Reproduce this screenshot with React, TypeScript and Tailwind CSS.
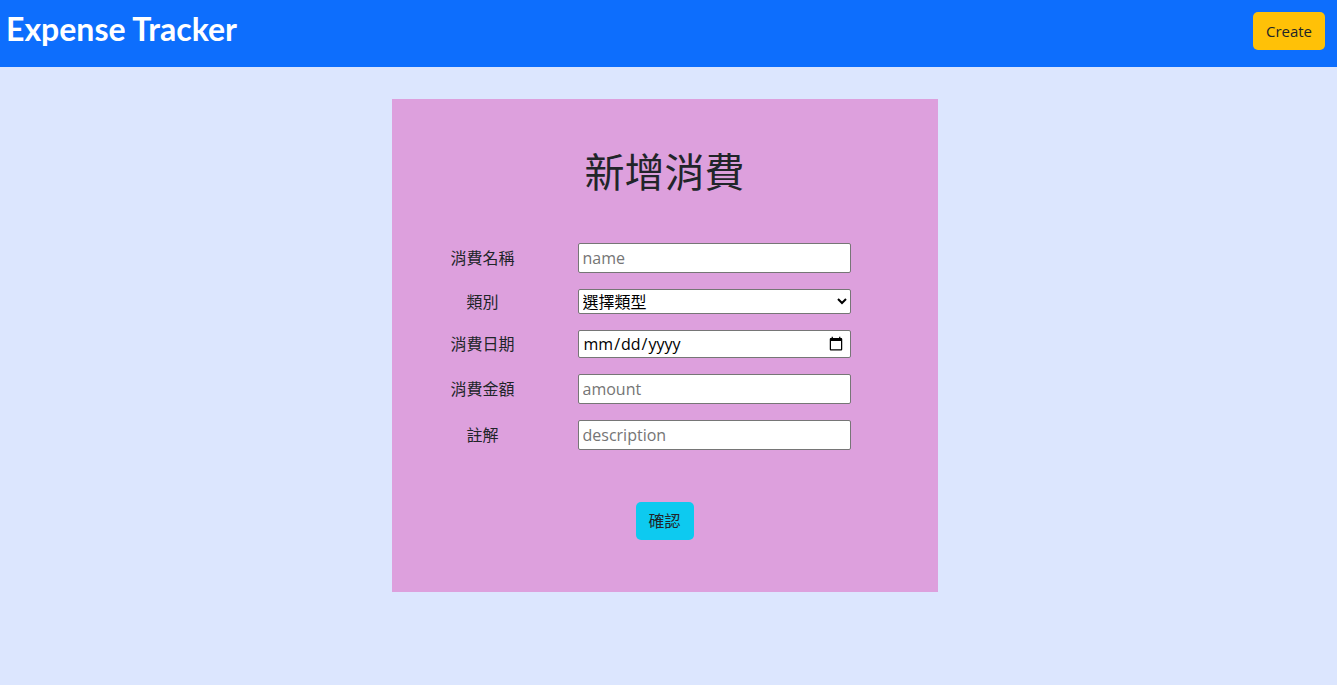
import React from 'react';

const font = { fontFamily: '"Open Sans", "Noto Sans CJK TC", sans-serif' };

// one label + field line of the form
const Row: React.FC<{ label: string; children: React.ReactNode }> = ({ label, children }) => (
  <div className="flex items-center">
    <div className="w-[100px] text-center text-[16px] text-[#212529]">{label}</div>
    <div className="ml-[45px]">{children}</div>
  </div>
);

const inputCls =
  'w-[273px] h-[30px] bg-white border border-[#767676] rounded-[2px] px-[4px] text-[16px] text-black placeholder:text-[#757575] outline-none';

export default function App() {
  return (
    <div className="min-h-[685px] bg-[#dce6fe]" style={font}>
      {/* Navbar */}
      <header className="h-[67px] bg-[#0d6efd] flex items-start justify-between">
        <h1 className="pl-[6px] pt-[8px] text-[32px] leading-[42px] font-bold text-white font-['Lato',sans-serif]">
          Expense Tracker
        </h1>
        <button className="mt-[12px] mr-[12px] h-[38px] w-[72px] rounded-[5px] bg-[#ffc107] text-[15px] text-[#212529]">
          Create
        </button>
      </header>

      {/* Card */}
      <div className="flex justify-center pt-[32px]">
        <div className="ml-[-8px] w-[546px] h-[493px] bg-[#dda0dd] flex flex-col">
          <h2 className="mt-[49px] text-center text-[40px] leading-[48px] text-[#212529]">新增消費</h2>
          <div className="mt-[47px] pl-[41px] flex flex-col gap-[16px]">
            <Row label="消費名稱">
              <input className={inputCls} placeholder="name" />
            </Row>
            <Row label="類別">
              <select className="w-[273px] h-[25px] bg-white border border-[#767676] rounded-[2px] text-[16px] text-black">
                <option>選擇類型</option>
              </select>
            </Row>
            <Row label="消費日期">
              <input type="date" className={inputCls + ' !h-[28px]'} />
            </Row>
            <Row label="消費金額">
              <input className={inputCls} placeholder="amount" />
            </Row>
            <Row label="註解">
              <input className={inputCls} placeholder="description" />
            </Row>
          </div>
          <div className="mt-[52px] flex justify-center">
            <button className="h-[38px] w-[58px] rounded-[5px] bg-[#0dcaf0] text-[16px] text-[#212529]">確認</button>
          </div>
        </div>
      </div>
    </div>
  );
}
